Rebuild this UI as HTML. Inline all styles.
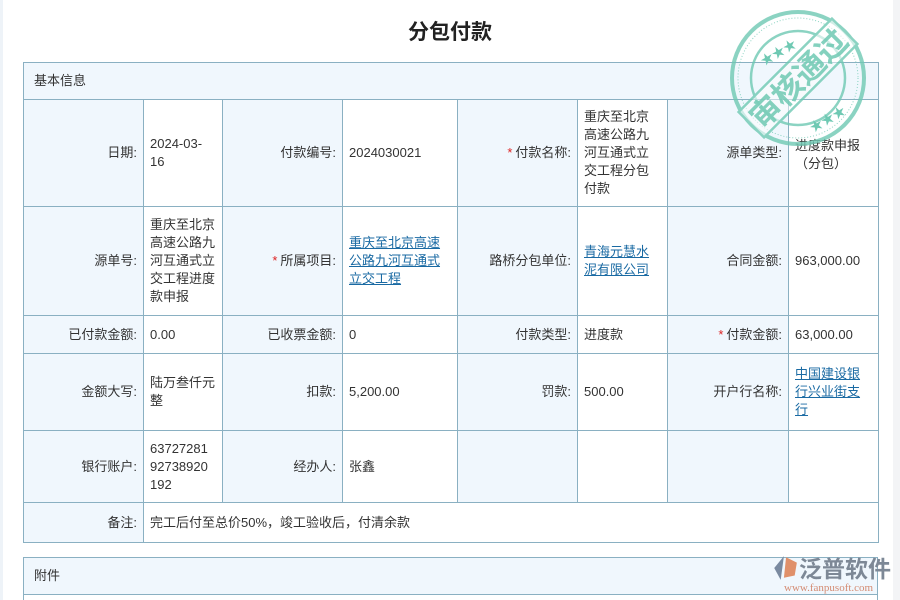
<!DOCTYPE html>
<html><head><meta charset="utf-8"><style>
*{margin:0;padding:0;box-sizing:border-box}
html,body{width:900px;height:600px;overflow:hidden}
body{background:#fff;font-family:"Liberation Sans","Noto Sans CJK SC",sans-serif;font-size:13px;color:#333;position:relative}
.ls{position:absolute;left:0;top:0;width:3px;height:600px;background:#eef3f8}
.rs{position:absolute;left:893px;top:0;width:7px;height:600px;background:#f3f4f6}
h1{position:absolute;left:0;width:900px;top:16px;text-align:center;font-size:21px;font-weight:bold;color:#222}
table{position:absolute;left:23px;border-collapse:collapse;table-layout:fixed}
td{border:1px solid #8ab0c2;padding:0 8px 0 6px;line-height:18px;vertical-align:middle;overflow-wrap:anywhere}
td.l{background:#f0f7fd;text-align:right;padding-right:6px}
td.n{padding-right:5px}
.hd{background:#f0f7fd;text-align:left;padding-left:10px}
a{color:#1a6aa3;text-decoration:underline}
.r{color:#d22;margin-right:3px}
</style></head><body>
<div class="ls"></div><div class="rs"></div>
<h1>分包付款</h1>
<table style="top:62px;width:855px">
<colgroup><col style="width:120px"><col style="width:79px"><col style="width:120px"><col style="width:115px"><col style="width:120px"><col style="width:90px"><col style="width:121px"><col style="width:90px"></colgroup>
<tr style="height:37px"><td class="hd" colspan="8">基本信息</td></tr>
<tr style="height:107px"><td class="l">日期:</td><td style="overflow-wrap:normal">2024-03-16</td><td class="l">付款编号:</td><td>2024030021</td><td class="l"><span class="r">*</span>付款名称:</td><td>重庆至北京高速公路九河互通式立交工程分包付款</td><td class="l">源单类型:</td><td style="vertical-align:top;padding-top:37px">进度款申报（分包）</td></tr>
<tr style="height:109px"><td class="l">源单号:</td><td class="n">重庆至北京高速公路九河互通式立交工程进度款申报</td><td class="l"><span class="r">*</span>所属项目:</td><td><a>重庆至北京高速公路九河互通式立交工程</a></td><td class="l">路桥分包单位:</td><td><a>青海元慧水泥有限公司</a></td><td class="l">合同金额:</td><td>963,000.00</td></tr>
<tr style="height:38px"><td class="l">已付款金额:</td><td>0.00</td><td class="l">已收票金额:</td><td>0</td><td class="l">付款类型:</td><td>进度款</td><td class="l"><span class="r">*</span>付款金额:</td><td>63,000.00</td></tr>
<tr style="height:77px"><td class="l">金额大写:</td><td class="n">陆万叁仟元整</td><td class="l">扣款:</td><td>5,200.00</td><td class="l">罚款:</td><td>500.00</td><td class="l">开户行名称:</td><td style="padding-right:16px"><a>中国建设银行兴业街支行</a></td></tr>
<tr style="height:72px"><td class="l">银行账户:</td><td style="padding-right:13px">6372728192738920192</td><td class="l">经办人:</td><td>张鑫</td><td class="l"></td><td></td><td class="l"></td><td></td></tr>
<tr style="height:40px"><td class="l">备注:</td><td colspan="7">完工后付至总价50%，竣工验收后，付清余款</td></tr>
</table>
<table style="top:557px;width:855px"><tr style="height:37px"><td class="hd">附件</td></tr><tr style="height:20px"><td style="background:#fff"></td></tr></table>
<svg style="position:absolute;left:728px;top:8px" width="140" height="140" viewBox="0 0 140 140">
<g fill="none" stroke="#6fc9b3" opacity="0.8">
<circle cx="70" cy="70" r="66" stroke-width="4"/>
<circle cx="70" cy="70" r="60" stroke-width="1" stroke-dasharray="1 2"/>
<circle cx="70" cy="70" r="47" stroke-width="2.5"/>
<g transform="rotate(-45 70 70)"><rect x="4" y="52" width="132" height="36" fill="#fff" fill-opacity="0.6" stroke-width="2.5"/></g>
</g>
<text x="70" y="82" text-anchor="middle" transform="rotate(-45 70 70)" font-size="31" font-weight="bold" fill="#6fc9b3" font-family="Noto Sans CJK SC,sans-serif" opacity="0.85">审核通过</text>
<text x="32" y="52" font-size="13" fill="#6fc9b3" transform="rotate(-30 45 48)">★★★</text><text x="80" y="118" font-size="13" fill="#6fc9b3" transform="rotate(-30 95 112)">★★★</text>
</svg>
<div style="position:absolute;left:771px;top:552px;width:122px;height:48px">
<svg style="position:absolute;left:0;top:2px" width="28" height="28" viewBox="0 0 26 26"><path d="M12 2 L3 13 L9 24 Z" fill="#7a8aa0"/><path d="M14 3 L24 8 L22 20 L12 22 Z" fill="#e0906a"/></svg>
<div style="position:absolute;left:28px;top:-2px;font-size:23px;color:#7d8896;font-family:'Noto Sans CJK SC',sans-serif;font-weight:bold">泛普软件</div>
<div style="position:absolute;left:13px;top:30px;font-size:11px;color:#d48b72;font-family:'Liberation Serif',serif">www.fanpusoft.com</div>
</div>
</body></html>
